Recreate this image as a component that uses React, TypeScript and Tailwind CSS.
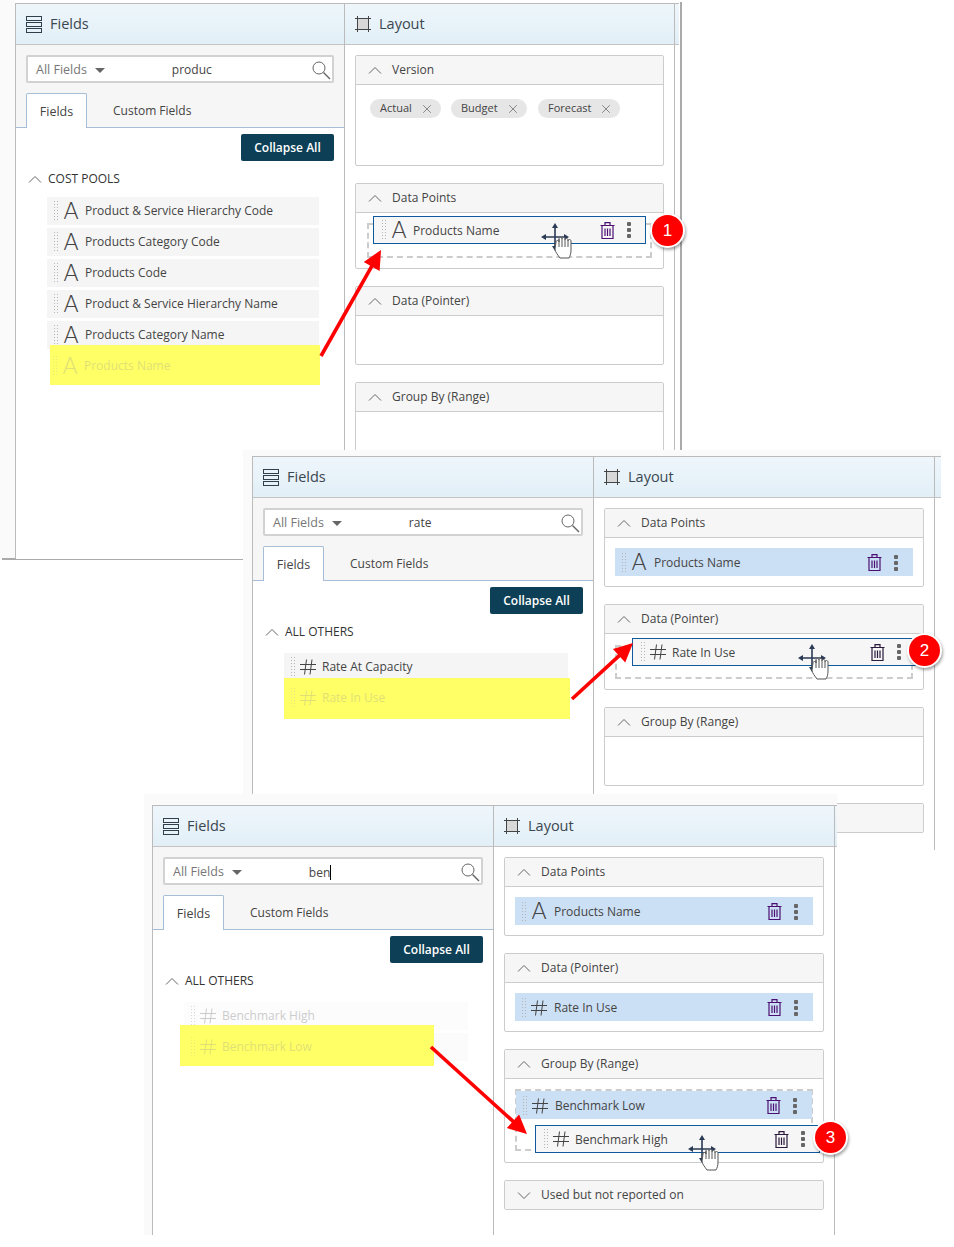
import type { ReactNode } from 'react';
import { X } from 'lucide-react';

function Chevron({ down }: { down?: boolean }) {
  return (
    <svg width="14" height="9" viewBox="0 0 14 9" fill="none" stroke="#666" strokeWidth="1" className="shrink-0">
      <polyline points={down ? '1,1.5 7,7.5 13,1.5' : '1,7.5 7,1.5 13,7.5'} />
    </svg>
  );
}

function FieldsIcon() {
  return (
    <svg width="16" height="17" viewBox="0 0 16 17" fill="none" stroke="#2f3f4c" strokeWidth="1" className="shrink-0">
      <rect x="0.5" y="0.5" width="15" height="4" />
      <rect x="0.5" y="6.5" width="15" height="4" />
      <rect x="0.5" y="12.5" width="15" height="4" />
    </svg>
  );
}

function LayoutIcon() {
  return (
    <svg width="16" height="16" viewBox="0 0 16 16" fill="none" stroke="#444" strokeWidth="1" className="shrink-0">
      <rect x="2.5" y="2.5" width="11" height="11" fill="#d8d8d8" />
      <path d="M0 2.5h16M0 13.5h16M2.5 0v16M13.5 0v16" />
    </svg>
  );
}

function SearchIcon() {
  return (
    <svg width="19" height="19" viewBox="0 0 19 19" fill="none" stroke="#666" strokeWidth="1" className="shrink-0">
      <circle cx="7" cy="7" r="6" />
      <path d="M11.5 11.5 18 18" strokeWidth="1.4" />
    </svg>
  );
}

function HashIcon() {
  return (
    <svg width="16" height="16" viewBox="0 0 16 16" fill="none" stroke="currentColor" strokeWidth="1" className="shrink-0">
      <path d="M6.5 0.5 4.5 15.5M12 0.5 10 15.5M0 5.5h16M0 10.5h16" />
    </svg>
  );
}

function Glyph({ kind }: { kind: 'text' | 'number' }) {
  if (kind === 'number') {
    return (
      <span className="flex w-[22px] shrink-0 justify-center">
        <HashIcon />
      </span>
    );
  }
  return <span className="w-[22px] shrink-0 text-center font-['DejaVu_Sans',sans-serif] text-[23px] font-extralight leading-none">A</span>;
}

function Grip() {
  return <span className="mr-[1px] h-[22px] w-[6px] shrink-0 bg-[radial-gradient(#b5b5b5_1px,transparent_1px)] bg-[length:3px_3px]" />;
}

function Trash({ color }: { color: string }) {
  return (
    <svg width="15" height="17" viewBox="0 0 15 17" fill="none" stroke={color} strokeWidth="1.2" className="shrink-0">
      <path d="M0.5 3.5h14M5 3.5V0.6h5v2.9M2 3.5v13h11v-13M5 6.5v7.5M7.5 6.5v7.5M10 6.5v7.5" />
    </svg>
  );
}

function Kebab() {
  return (
    <span className="ml-[12px] flex shrink-0 flex-col gap-[2px]">
      <i className="size-[4px] rounded-[1px] bg-[#666]" />
      <i className="size-[4px] rounded-[1px] bg-[#666]" />
      <i className="size-[4px] rounded-[1px] bg-[#666]" />
    </span>
  );
}

function SourceRow({ kind, label, faded }: { kind: 'text' | 'number'; label: string; faded?: boolean }) {
  return (
    <div className={`flex h-[28px] items-center pl-[6px] text-[12px] ${faded ? 'bg-[#fbfbfb] text-[#999] opacity-50' : 'bg-[#f5f5f5] text-[#444]'}`}>
      <Grip />
      <Glyph kind={kind} />
      <span className="ml-[3px]">{label}</span>
    </div>
  );
}

// the faint copy of a field that sits on the yellow marker
function Highlight({ kind, label, className, rowClass }: { kind: 'text' | 'number'; label: string; className: string; rowClass: string }) {
  return (
    <div className={`absolute bg-[#ffff66] ${className}`}>
      <div className={`flex h-[28px] items-center pl-[6px] text-[12px] text-[#999] opacity-30 ${rowClass}`}>
        <Grip />
        <Glyph kind={kind} />
        <span className="ml-[3px]">{label}</span>
      </div>
    </div>
  );
}

function PlacedRow({ kind, label, trash = '#4b0f73' }: { kind: 'text' | 'number'; label: string; trash?: string }) {
  return (
    <div className="flex h-[28px] items-center bg-[#cce0f5] pl-[6px] pr-[15px] pt-[1px] text-[12px] text-[#444]">
      <Grip />
      <Glyph kind={kind} />
      <span className="ml-[4px] flex-1 pt-[1px]">{label}</span>
      <Trash color={trash} />
      <Kebab />
    </div>
  );
}

function DraggedRow({ kind, label, trash, className }: { kind: 'text' | 'number'; label: string; trash: string; className: string }) {
  return (
    <div className={`absolute flex h-[28px] items-center border border-[#0f5a9c] bg-[#f6f6f6] pl-[7px] pr-[14px] text-[12px] text-[#444] ${className}`}>
      <Grip />
      <Glyph kind={kind} />
      <span className="ml-[3px] flex-1 pt-[2px]">{label}</span>
      <Trash color={trash} />
      <Kebab />
    </div>
  );
}

function Section({ title, down, children, bodyClass }: { title: string; down?: boolean; children?: ReactNode; bodyClass?: string }) {
  return (
    <div className="mb-[17px] rounded-[2px] border border-[#ccc] bg-white">
      <div className="flex h-[28px] items-center gap-[10px] bg-[#f6f6f6] pl-[12px] text-[12px] text-[#444]">
        <Chevron down={down} />
        <span>{title}</span>
      </div>
      {children !== undefined || bodyClass ? <div className={`relative border-t border-[#ccc] ${bodyClass ?? ''}`}>{children}</div> : null}
    </div>
  );
}

function Chip({ label, className }: { label: string; className: string }) {
  return (
    <span className={`flex h-[19px] items-center justify-between rounded-full bg-[#e6e6e6] pl-[10px] pr-[7px] text-[11px] text-[#444] ${className}`}>
      {label}
      <X size={14} strokeWidth={1} color="#444" />
    </span>
  );
}

function PanelHeader({ icon, title }: { icon: ReactNode; title: string }) {
  return (
    <div className="flex h-[41px] shrink-0 items-center gap-[8px] border-b border-[#c4c4c4] bg-gradient-to-b from-[#eef6fb] to-[#e2eff7] pl-[10px] text-[14.5px] text-[#3a4650]">
      {icon}
      <span>{title}</span>
    </div>
  );
}

function FieldsColumn({ query, caret, widthClass, group, listClass, children }: { query: string; caret?: boolean; widthClass: string; group: string; listClass: string; children: ReactNode }) {
  return (
    <div className={`flex shrink-0 flex-col border-r border-[#bbb] ${widthClass}`}>
      <PanelHeader icon={<FieldsIcon />} title="Fields" />
      <div className="bg-[#f6f6f6] px-[10px] pt-[10px]">
        <div className="flex h-[28px] items-center rounded-[2px] border-2 border-[#d2d2d2] bg-white pl-[8px] pr-[1px] pt-[2px] text-[12px]">
          <span className="text-[12.5px] text-[#777]">All Fields</span>
          <span className="ml-[8px] h-0 w-0 border-x-[5px] border-t-[5px] border-x-transparent border-t-[#666]" />
          <span className="ml-[67px] flex-1 text-[#444]">
            {query}
            {caret ? <span className="inline-block h-[15px] w-px translate-y-[3px] bg-black" /> : null}
          </span>
          <SearchIcon />
        </div>
        <div className="mt-[10px] flex h-[34px] items-stretch text-[12px] text-[#444]">
          <span className="relative z-10 -mb-px flex w-[61px] items-center justify-center rounded-t-[2px] border border-b-0 border-[#a6bdd6] bg-white pt-[2px] text-[12.5px]">Fields</span>
          <span className="ml-[26px] flex items-center pt-[2px]">Custom Fields</span>
        </div>
      </div>
      <div className="flex-1 border-t border-[#a6bdd6] bg-white">
        <div className="mr-[10px] mt-[6px] flex justify-end">
          <span className="flex h-[27px] w-[93px] items-center justify-center rounded-[2px] bg-[#0d3f56] text-[12px] font-semibold text-white">Collapse All</span>
        </div>
        <div className="mt-[10px] flex h-[16px] items-center gap-[6px] pl-[12px] text-[12px] text-[#333]">
          <Chevron />
          <span>{group}</span>
        </div>
        <div className={`ml-[31px] mr-[25px] flex flex-col gap-[3px] ${listClass}`}>{children}</div>
      </div>
    </div>
  );
}

function LayoutColumn({ widthClass, children }: { widthClass: string; children: ReactNode }) {
  return (
    <div className={`flex shrink-0 flex-col overflow-hidden border-r border-[#bbb] ${widthClass}`}>
      <PanelHeader icon={<LayoutIcon />} title="Layout" />
      <div className="flex-1 bg-white px-[10px] pt-[10px]">{children}</div>
    </div>
  );
}

function HeaderTail({ widthClass }: { widthClass: string }) {
  return <div className={`h-[41px] shrink-0 border-b border-[#c4c4c4] bg-gradient-to-b from-[#eef6fb] to-[#e2eff7] ${widthClass}`} />;
}

function DropCursor({ className }: { className: string }) {
  return (
    <svg width="40" height="38" viewBox="0 0 40 38" className={`absolute ${className}`}>
      <path d="M14 2v24M2 14h24" fill="none" stroke="#2b3a55" strokeWidth="1.6" />
      <path d="M14 0l-3 5h6zM14 28l-3-5h6zM0 14l5-3v6zM28 14l-5-3v6z" fill="#2b3a55" />
      <g transform="translate(-2 3)">
        <path
          d="M17 16c0-2 3-2 3 0v-3c0-2 3-2 3 0v0c0-2 3-2 3 0v1c0-2 3-2 3 0v1c0-2 3-2 3 0v9c0 4-1 6-2 8H21c-2-3-5-6-5-9z"
          fill="#fff"
          stroke="#555"
          strokeWidth="1"
        />
        <path d="M20 13v8M23 13v8M26 14v7M29 15v6" stroke="#555" strokeWidth="1" fill="none" />
      </g>
    </svg>
  );
}

function Badge({ n, className }: { n: number; className: string }) {
  return (
    <span className={`absolute flex size-[35px] items-center justify-center rounded-full border-2 border-white bg-[#f00] font-['Liberation_Sans',sans-serif] text-[17px] text-white shadow-[1px_2px_3px_rgba(0,0,0,0.35)] ${className}`}>
      {n}
    </span>
  );
}

function Arrow({ x1, y1, x2, y2 }: { x1: number; y1: number; x2: number; y2: number }) {
  const a = Math.atan2(y2 - y1, x2 - x1);
  const len = 21;
  const spread = 0.45;
  const p1 = `${x2 - len * Math.cos(a - spread)},${y2 - len * Math.sin(a - spread)}`;
  const p2 = `${x2 - len * Math.cos(a + spread)},${y2 - len * Math.sin(a + spread)}`;
  return (
    <>
      <line x1={x1} y1={y1} x2={x2 - 12 * Math.cos(a)} y2={y2 - 12 * Math.sin(a)} stroke="#f00" strokeWidth="3.6" />
      <polygon points={`${x2},${y2} ${p1} ${p2}`} fill="#f00" />
    </>
  );
}

export default function App() {
  return (
    <div className="relative h-[1247px] w-[954px] overflow-hidden bg-white font-['Open_Sans',sans-serif]">
      {/* first capture */}
      <div className="absolute left-0 top-0 h-[559px] w-[15px] bg-[#fafafa]" />
      <div className="absolute left-[2px] top-[558px] h-[2px] w-[242px] bg-[#aaa]" />
      <div className="absolute left-[680px] top-[2px] h-[449px] w-[2px] bg-[#aaa]" />
      <div className="absolute left-[15px] top-[3px] flex h-[556px] border-l border-t border-[#bbb] bg-white">
        <FieldsColumn query="produc" widthClass="w-[329px]" group="COST POOLS" listClass="mt-[10px]">
          <SourceRow kind="text" label="Product & Service Hierarchy Code" />
          <SourceRow kind="text" label="Products Category Code" />
          <SourceRow kind="text" label="Products Code" />
          <SourceRow kind="text" label="Product & Service Hierarchy Name" />
          <SourceRow kind="text" label="Products Category Name" />
        </FieldsColumn>
        <LayoutColumn widthClass="w-[330px]">
          <Section title="Version" bodyClass="h-[81px]">
            <div className="flex gap-[10px] pl-[14px] pt-[14px]">
              <Chip label="Actual" className="w-[71px]" />
              <Chip label="Budget" className="w-[76px]" />
              <Chip label="Forecast" className="ml-[1px] w-[82px]" />
            </div>
          </Section>
          <Section title="Data Points" bodyClass="h-[56px]">
            <div className="absolute left-[11px] top-[10px] h-[35px] w-[285px] border-2 border-dashed border-[#ccc]" />
            <DraggedRow kind="text" label="Products Name" trash="#4b0f73" className="left-[17px] top-[3px] w-[273px]" />
          </Section>
          <Section title="Data (Pointer)" bodyClass="h-[49px]" />
          <Section title="Group By (Range)" bodyClass="h-[49px]" />
        </LayoutColumn>
        <HeaderTail widthClass="w-[4px]" />
      </div>

      {/* second capture */}
      <div className="absolute left-[243px] top-[450px] h-[400px] w-[698px] bg-[#fafafa] pl-[9px] pt-[6px]">
        <div className="flex h-[394px] border-l border-t border-[#bbb] bg-white">
          <FieldsColumn query="rate" widthClass="w-[341px]" group="ALL OTHERS" listClass="mt-[13px]">
            <SourceRow kind="number" label="Rate At Capacity" />
          </FieldsColumn>
          <LayoutColumn widthClass="w-[341px]">
            <Section title="Data Points" bodyClass="p-[10px] h-[49px]">
              <PlacedRow kind="text" label="Products Name" />
            </Section>
            <Section title="Data (Pointer)" bodyClass="h-[56px]">
              <div className="absolute left-[10px] top-[11px] h-[34px] w-[298px] border-2 border-dashed border-[#ccc]" />
              <DraggedRow kind="number" label="Rate In Use" trash="#2b1a3b" className="left-[27px] top-[4px] w-[284px]" />
            </Section>
            <Section title="Group By (Range)" bodyClass="h-[49px]" />
            <Section title="" />
          </LayoutColumn>
          <HeaderTail widthClass="w-[6px]" />
        </div>
      </div>

      {/* third capture */}
      <div className="absolute left-[144px] top-[794px] h-[441px] w-[693px] bg-[#fafafa] pl-[8px] pt-[11px]">
        <div className="flex h-[430px] border-l border-t border-[#bbb] bg-white">
          <FieldsColumn query="ben" caret widthClass="w-[341px]" group="ALL OTHERS" listClass="mt-[13px]">
            <SourceRow kind="number" label="Benchmark High" faded />
            <div className="h-[28px] bg-[#fbfbfb]" />
          </FieldsColumn>
          <LayoutColumn widthClass="w-[341px]">
            <Section title="Data Points" bodyClass="p-[10px] h-[49px]">
              <PlacedRow kind="text" label="Products Name" />
            </Section>
            <Section title="Data (Pointer)" bodyClass="p-[10px] h-[49px]">
              <PlacedRow kind="number" label="Rate In Use" />
            </Section>
            <Section title="Group By (Range)" bodyClass="h-[84px]">
              <div className="absolute left-[10px] top-[10px] h-[62px] w-[298px] border-2 border-dashed border-[#ccc]" />
              <div className="absolute left-[11px] top-[12px] w-[296px]">
                <PlacedRow kind="number" label="Benchmark Low" />
              </div>
              <DraggedRow kind="number" label="Benchmark High" trash="#2b1a3b" className="left-[30px] top-[46px] w-[285px]" />
            </Section>
            <Section title="Used but not reported on" down />
          </LayoutColumn>
          <HeaderTail widthClass="w-[2px]" />
        </div>
      </div>

      {/* annotations over the captures */}
      <Highlight kind="text" label="Products Name" className="left-[50px] top-[345px] h-[40px] w-[270px]" rowClass="-ml-[4px] mt-[7px]" />
      <Highlight kind="number" label="Rate In Use" className="left-[284px] top-[678px] h-[41px] w-[286px]" rowClass="mt-[6px]" />
      <Highlight kind="number" label="Benchmark Low" className="left-[180px] top-[1025px] h-[41px] w-[254px]" rowClass="ml-[4px] mt-[8px]" />

      <svg width="954" height="1247" className="pointer-events-none absolute left-0 top-0">
        <Arrow x1={321} y1={356} x2={381} y2={250} />
        <Arrow x1={572} y1={699} x2={633} y2={643} />
        <Arrow x1={431} y1={1047} x2={527} y2={1134} />
      </svg>

      <DropCursor className="left-[541px] top-[223px]" />
      <DropCursor className="left-[798px] top-[644px]" />
      <DropCursor className="left-[688px] top-[1135px]" />

      <Badge n={1} className="left-[650px] top-[213px]" />
      <Badge n={2} className="left-[907px] top-[633px]" />
      <Badge n={3} className="left-[813px] top-[1120px]" />
    </div>
  );
}
